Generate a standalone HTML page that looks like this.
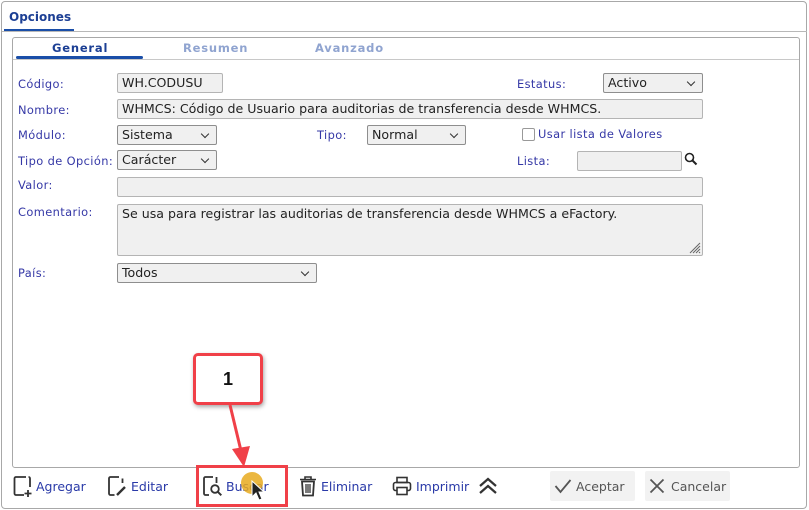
<!DOCTYPE html>
<html><head><meta charset="utf-8"><style>
*{box-sizing:border-box;margin:0;padding:0}
body{width:809px;height:510px;background:#fff;font-family:"DejaVu Sans","Liberation Sans",sans-serif;position:relative;overflow:hidden}
.a{position:absolute}
.lbl{position:absolute;font-size:11.4px;color:#3538a6;letter-spacing:.4px}
.inp{position:absolute;background:#f0f0f0;border:1px solid #b4b4b4;border-radius:2px;font-size:12.6px;color:#222;padding:1px 4px;height:20px;line-height:16px;white-space:nowrap;overflow:hidden}
.sel{background:#f0f0f0;border:1px solid #8e8e8e}
.sel:after{content:"";position:absolute;right:8px;top:5px;width:5px;height:5px;border-right:1.3px solid #333;border-bottom:1.3px solid #333;transform:rotate(45deg)}
.btn{position:absolute;font-size:12.5px;color:#2a3aa8;top:479px}
</style></head><body>
<div class="a" style="left:1px;top:1px;width:806px;height:508px;border:1px solid #a8a8a8;border-radius:4px"></div>
<div class="a" style="left:9px;top:10px;font-size:12px;font-weight:bold;color:#1c3f94">Opciones</div>
<div class="a" style="left:4px;top:29px;width:70px;height:2px;background:#1a4ea8"></div>
<div class="a" style="left:2px;top:31px;width:805px;height:1px;background:#b8b8b8"></div>
<div class="a" style="left:12px;top:37px;width:788px;height:431px;border:1px solid #a8a8a8;border-radius:3px"></div>
<div class="a" style="left:52px;top:41px;font-size:11.5px;font-weight:bold;color:#1c3f94;letter-spacing:.8px">General</div>
<div class="a" style="left:183px;top:41px;font-size:11.5px;font-weight:bold;color:#90a4d0;letter-spacing:.8px">Resumen</div>
<div class="a" style="left:315px;top:41px;font-size:11.5px;font-weight:bold;color:#90a4d0;letter-spacing:.8px">Avanzado</div>
<div class="a" style="left:16px;top:56px;width:127px;height:3px;background:#1a4ea8;border-radius:2px"></div>
<div class="a" style="left:13px;top:59px;width:786px;height:1px;background:#c8c8c8"></div>

<div class="lbl" style="left:18px;top:77px">Código:</div>
<div class="inp" style="left:117px;top:73px;width:106px">WH.CODUSU</div>
<div class="lbl" style="left:517px;top:77px">Estatus:</div>
<div class="inp sel" style="left:603px;top:73px;width:100px">Activo</div>

<div class="lbl" style="left:18px;top:103px">Nombre:</div>
<div class="inp" style="left:117px;top:99px;width:586px">WHMCS: Código de Usuario para auditorias de transferencia desde WHMCS.</div>

<div class="lbl" style="left:18px;top:128px">Módulo:</div>
<div class="inp sel" style="left:117px;top:125px;width:100px">Sistema</div>
<div class="lbl" style="left:317px;top:128px">Tipo:</div>
<div class="inp sel" style="left:367px;top:125px;width:99px">Normal</div>
<div class="a" style="left:522px;top:128px;width:13px;height:13px;border:1px solid #999;border-radius:2px"></div>
<div class="lbl" style="left:538px;top:127px">Usar lista de Valores</div>

<div class="lbl" style="left:18px;top:154px">Tipo de Opción:</div>
<div class="inp sel" style="left:117px;top:150px;width:100px">Carácter</div>
<div class="lbl" style="left:517px;top:154px">Lista:</div>
<div class="inp" style="left:577px;top:151px;width:105px"></div>
<svg class="a" style="left:684px;top:152px" width="14" height="14"><circle cx="5.5" cy="5.5" r="4" fill="none" stroke="#222" stroke-width="1.6"/><path d="M8.5 8.5l4 4" stroke="#222" stroke-width="2"/></svg>

<div class="lbl" style="left:18px;top:178px">Valor:</div>
<div class="inp" style="left:117px;top:177px;width:586px"></div>

<div class="lbl" style="left:18px;top:205px">Comentario:</div>
<div class="inp" style="left:117px;top:204px;width:586px;height:52px">Se usa para registrar las auditorias de transferencia desde WHMCS a eFactory.</div>
<svg class="a" style="left:688px;top:241px" width="13" height="13"><path d="M12 2L2 12M12 5L5 12M12 8L8 12M12 11L11 12" stroke="#666" stroke-width="1"/></svg>

<div class="lbl" style="left:18px;top:266px">País:</div>
<div class="inp sel" style="left:117px;top:263px;width:200px">Todos</div>

<svg class="a" style="left:13px;top:475px" width="20" height="22"><path d="M13 2H3a1.5 1.5 0 0 0-1.5 1.5v15A1.5 1.5 0 0 0 3 20h8M17 12V3.5A1.5 1.5 0 0 0 15.5 2" fill="none" stroke="#333" stroke-width="1.8"/><path d="M15 15v7M11.5 18.5h7" stroke="#333" stroke-width="1.8"/></svg>
<div class="btn" style="left:36px">Agregar</div>
<svg class="a" style="left:107px;top:475px" width="20" height="22"><path d="M12 2H3.5A1.5 1.5 0 0 0 2 3.5v15A1.5 1.5 0 0 0 3.5 20h4M15.5 8V3.5" fill="none" stroke="#333" stroke-width="1.8"/><path d="M10 20l8-8" stroke="#333" stroke-width="2.4"/></svg>
<div class="btn" style="left:131px">Editar</div>
<svg class="a" style="left:202px;top:475px" width="22" height="22"><path d="M11 2H3.5A1.5 1.5 0 0 0 2 3.5v15A1.5 1.5 0 0 0 3.5 20H7M14.5 2V8" fill="none" stroke="#333" stroke-width="1.8"/><circle cx="13" cy="14" r="3.8" fill="none" stroke="#333" stroke-width="1.8"/><path d="M15.8 16.8l3.5 3.5" stroke="#333" stroke-width="2"/></svg>
<div class="btn" style="left:226px">Buscar</div>
<svg class="a" style="left:298px;top:475px" width="20" height="22"><path d="M2 4.5h16M7 4.5V2h6v2.5" fill="none" stroke="#333" stroke-width="1.6"/><path d="M4 6.5h12l-1 14H5z" fill="none" stroke="#333" stroke-width="1.8"/><path d="M8 9v9M10 9v9M12 9v9" stroke="#333" stroke-width="1.3"/></svg>
<div class="btn" style="left:321px">Eliminar</div>
<svg class="a" style="left:392px;top:476px" width="20" height="20"><rect x="5" y="1.5" width="10" height="5" fill="none" stroke="#333" stroke-width="1.6"/><rect x="1.5" y="6.5" width="17" height="8" rx="2" fill="none" stroke="#333" stroke-width="1.6"/><rect x="5" y="11.5" width="10" height="7" fill="#fff" stroke="#333" stroke-width="1.6"/></svg>
<div class="btn" style="left:416px">Imprimir</div>
<svg class="a" style="left:478px;top:477px" width="20" height="18"><path d="M2 9l8-7 8 7M2 16l8-7 8 7" fill="none" stroke="#333" stroke-width="2.2"/></svg>

<div class="a" style="left:550px;top:471px;width:85px;height:30px;background:#f2f2f2;border-radius:2px"></div>
<svg class="a" style="left:554px;top:478px" width="18" height="16"><path d="M1.5 8l5 6L16.5 2" fill="none" stroke="#555" stroke-width="1.8"/></svg>
<div class="a" style="left:576px;top:479px;font-size:12.5px;color:#555">Aceptar</div>
<div class="a" style="left:645px;top:471px;width:85px;height:30px;background:#f2f2f2;border-radius:2px"></div>
<svg class="a" style="left:649px;top:478px" width="16" height="16"><path d="M1.5 1.5l13 13M14.5 1.5l-13 13" stroke="#555" stroke-width="1.8"/></svg>
<div class="a" style="left:671px;top:479px;font-size:12.5px;color:#555">Cancelar</div>

<div class="a" style="left:193px;top:353px;width:70px;height:52px;background:#fff;border:3px solid #f04048;border-radius:5px;box-shadow:1px 2px 4px rgba(0,0,0,.35);font:bold 18px 'Liberation Sans',sans-serif;color:#111;text-align:center;line-height:46px">1</div>
<svg class="a" style="left:220px;top:403px" width="40" height="70"><path d="M10 2L22 52" stroke="#f04048" stroke-width="3"/><path d="M12 46L24 64L30 43z" fill="#f04048"/></svg>
<div class="a" style="left:196px;top:465px;width:92px;height:42px;border:3px solid #f04048"></div>
<div class="a" style="left:241px;top:472px;width:22px;height:22px;border-radius:50%;background:rgba(232,170,30,.85)"></div>
<svg class="a" style="left:251px;top:480px" width="14" height="22"><path d="M1 1v16l4-4 3 7 3-1-3-7h5z" fill="#222" stroke="#fff" stroke-width="1"/></svg>
</body></html>
